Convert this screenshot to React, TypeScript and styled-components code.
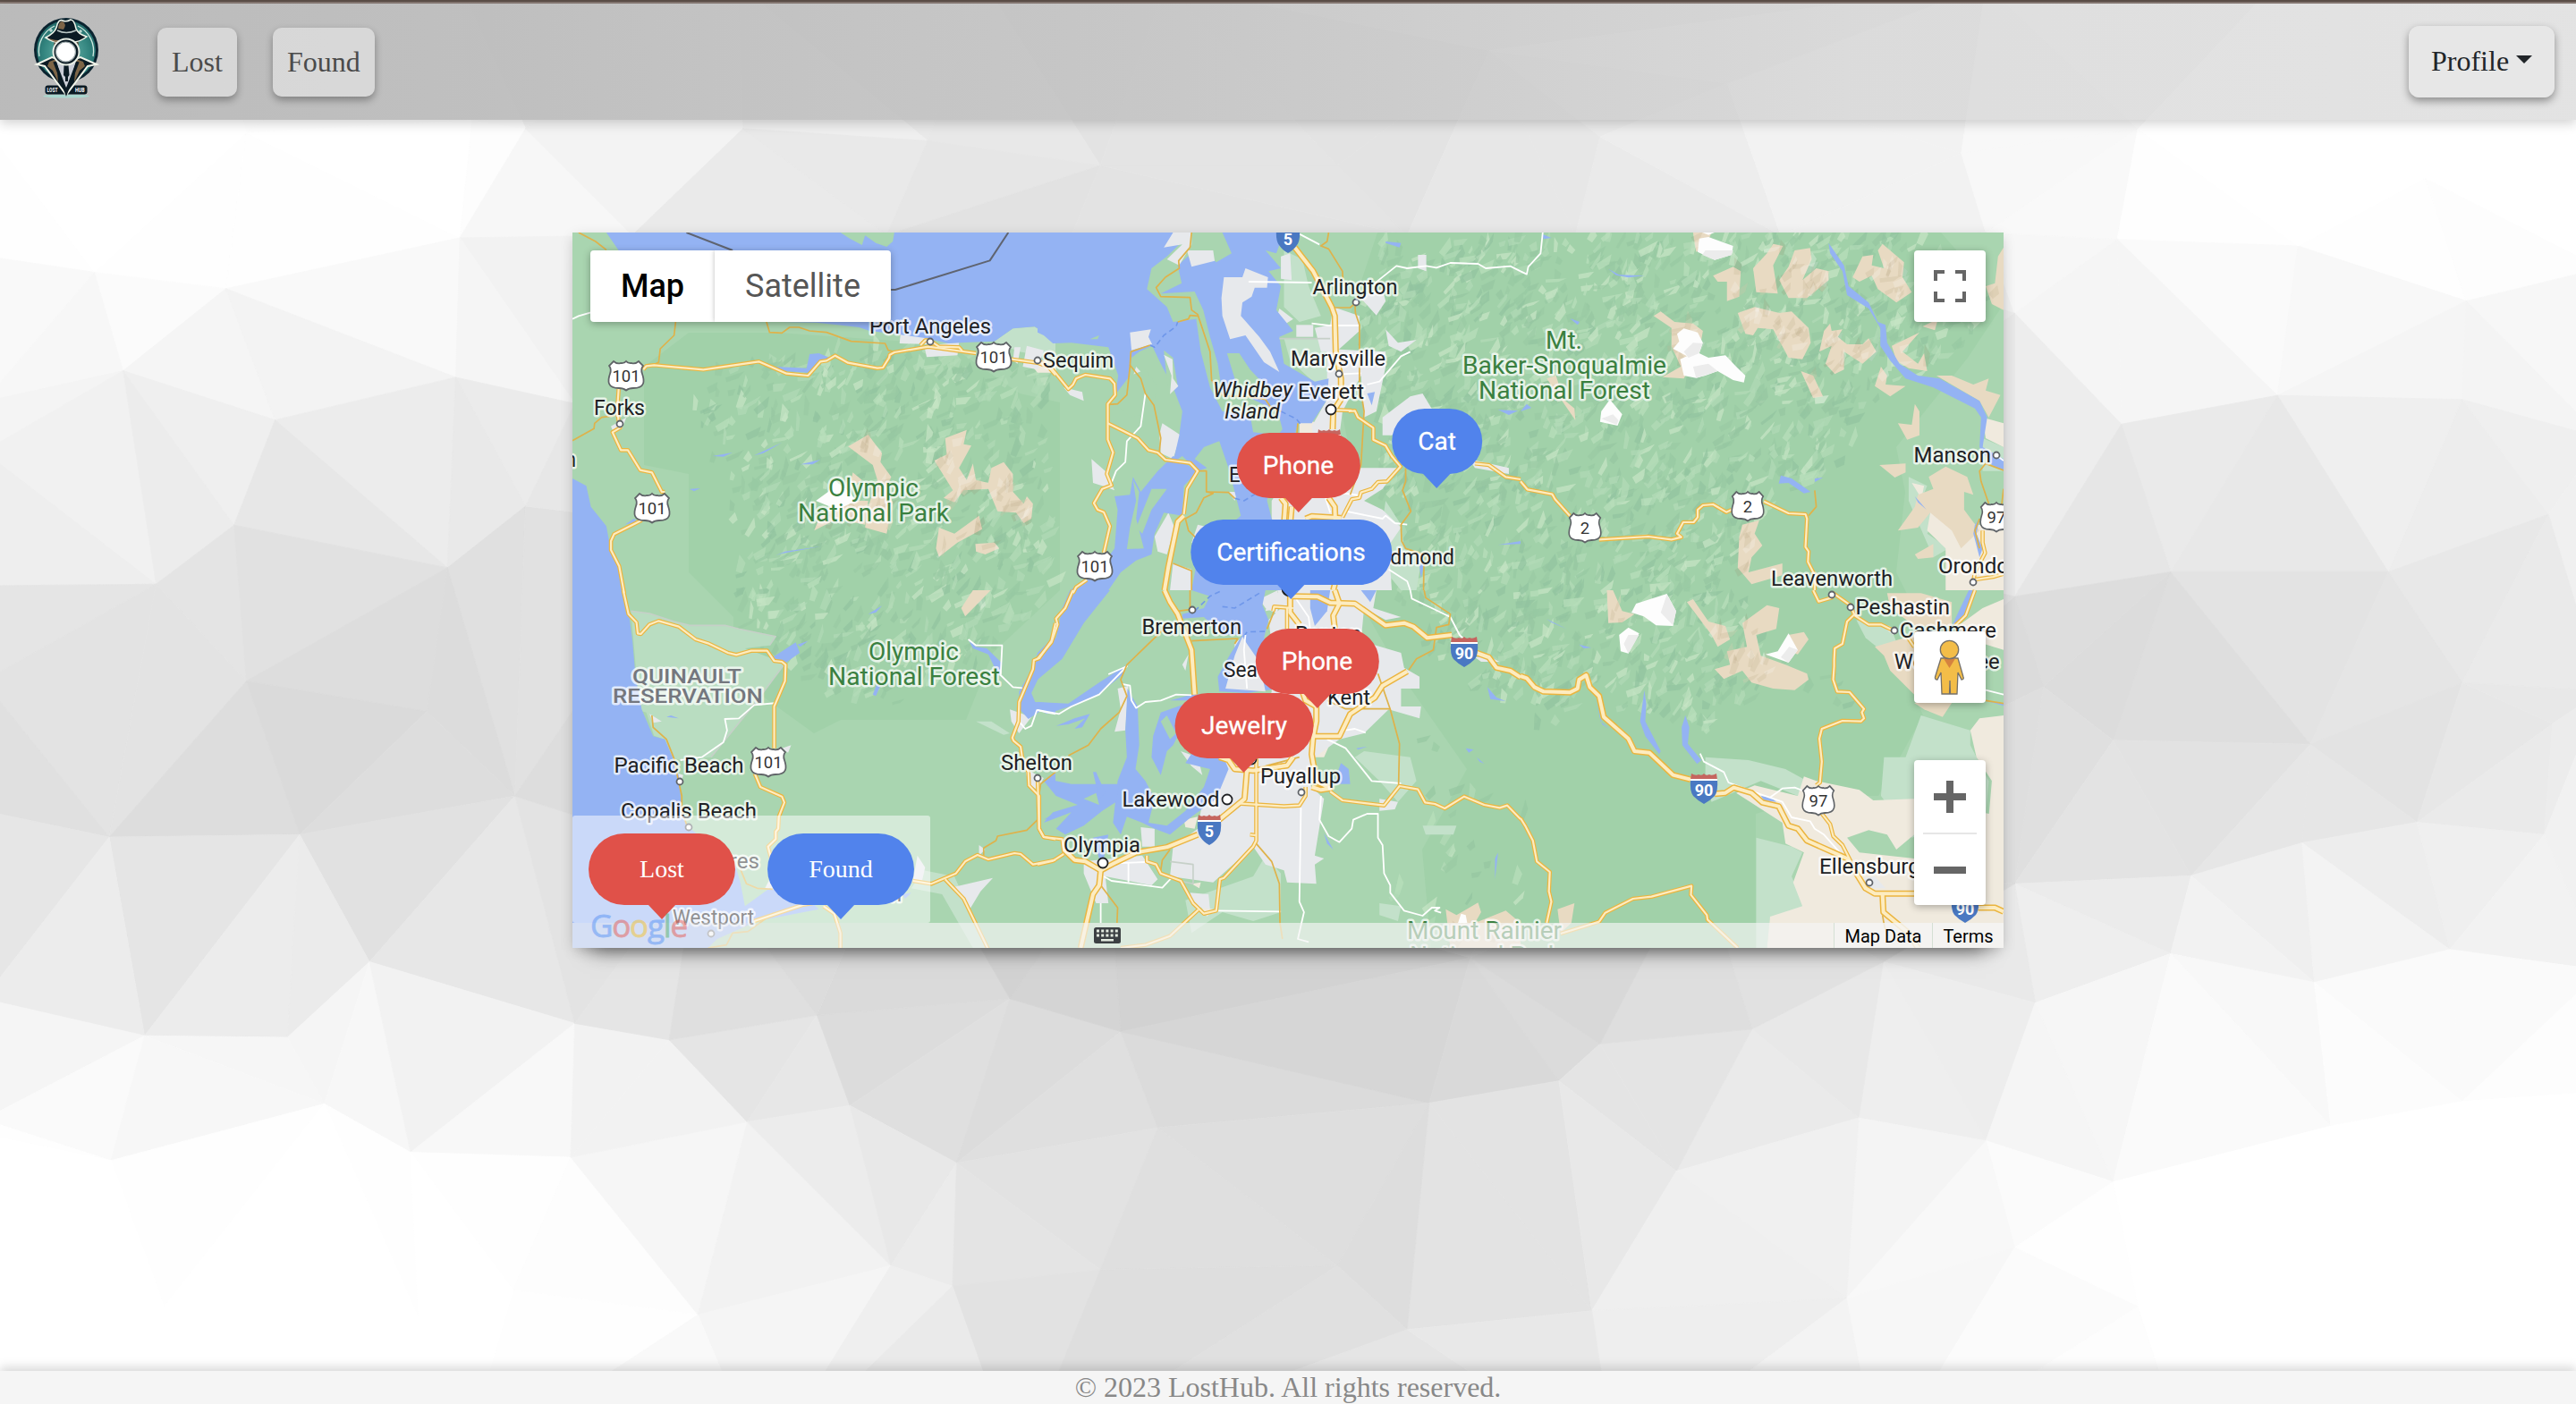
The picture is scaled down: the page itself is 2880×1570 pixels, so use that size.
import React from "react";
import styled, { createGlobalStyle } from "styled-components";

const GlobalStyle = createGlobalStyle`
  html, body, #root { height: 100%; }
  body { margin: 0; font-family: "Liberation Serif", "Times New Roman", serif; overflow: hidden; background: #fff; }
  * { box-sizing: border-box; }
`;

/* ---------- page shell ---------- */

const Page = styled.div`
  position: relative;
  height: 100vh;
  display: flex;
  flex-direction: column;
  isolation: isolate;
`;

const Backdrop = styled.svg`
  position: absolute;
  inset: 0;
  width: 100%;
  height: 100%;
  z-index: -1;
`;

const TopEdge = styled.div`
  height: 4px;
  flex: none;
  background: linear-gradient(#5c4f48 50%, #877973 50%);
`;

const Navbar = styled.header`
  flex: none;
  height: 130px;
  display: flex;
  align-items: center;
  padding: 0 24px 0 37px;
  background: linear-gradient(90deg, rgba(184, 184, 184, 0.96) 0%, rgba(186, 186, 186, 0.92) 18%, rgba(190, 190, 190, 0.75) 45%, rgba(204, 204, 204, 0.6) 72%, rgba(208, 208, 208, 0.6) 100%);
  box-shadow: 0 4px 12px rgba(0, 0, 0, 0.18);
`;

const Brand = styled.a`
  display: flex;
  width: 76px;
  height: 94px;
  margin: -6px 63px 0 0;
`;

const NavLinks = styled.nav`
  display: flex;
  gap: 40px;
  flex: 1;
`;

const NavButton = styled.a`
  height: 77px;
  padding: 0 16px;
  display: flex;
  align-items: center;
  border-radius: 10px;
  background: rgba(255, 255, 255, 0.4);
  box-shadow: 0 4px 8px rgba(0, 0, 0, 0.32);
  color: #4b4b4b;
  font-size: 32px;
`;

const ProfileButton = styled.button`
  height: 80px;
  width: 163px;
  margin-top: -1px;
  padding: 0 25px;
  border: 0;
  display: flex;
  align-items: center;
  gap: 8px;
  border-radius: 12px;
  background: rgba(232, 232, 232, 0.85);
  box-shadow: 0 4px 10px rgba(0, 0, 0, 0.38);
  color: #212529;
  font: 32px "Liberation Serif", "Times New Roman", serif;
`;

const Caret = styled.span`
  border: 9px solid transparent;
  border-top-color: #212529;
  border-bottom: 0;
  margin-top: -5px;
`;

const Main = styled.main`
  flex: 1;
  display: flex;
  justify-content: center;
  align-items: flex-start;
  padding-top: 126px;
`;

const Footer = styled.footer`
  flex: none;
  height: 37px;
  display: flex;
  align-items: center;
  justify-content: center;
  background: #f5f5f5;
  box-shadow: 0 -4px 12px rgba(0, 0, 0, 0.16);
  color: #888;
  font-size: 32px;
  line-height: 37px;
`;

/* ---------- map ---------- */

const MapFrame = styled.section`
  position: relative;
  width: 1600px;
  height: 800px;
  background: #a9d5b0;
  box-shadow: 0 4px 14px -2px rgba(0, 0, 0, 0.22), 0 22px 22px -20px rgba(0, 0, 0, 0.6);
  font-family: Roboto, "Liberation Sans", sans-serif;
`;

const MapCanvas = styled.svg`
  display: block;
  width: 1600px;
  height: 800px;
`;

const Control = styled.div<{ $top: number }>`
  position: absolute;
  right: 20px;
  top: ${(p) => p.$top}px;
  width: 80px;
  min-height: 80px;
  display: flex;
  flex-direction: column;
  align-items: center;
  justify-content: center;
  background: #fff;
  border-radius: 4px;
  box-shadow: 0 2px 8px rgba(0, 0, 0, 0.3);
`;

const ZoomCell = styled.div`
  height: 81px;
  display: flex;
  align-items: center;
  justify-content: center;
  & + & {
    border-top: 2px solid #e6e6e6;
  }
  width: 60px;
`;

const MapTypes = styled.div`
  position: absolute;
  left: 20px;
  top: 20px;
  height: 80px;
  display: flex;
  border-radius: 4px;
  background: #fff;
  box-shadow: 0 2px 8px rgba(0, 0, 0, 0.3);
  overflow: hidden;
`;

const MapType = styled.div<{ $active?: boolean; $w: number }>`
  width: ${(p) => p.$w}px;
  display: flex;
  align-items: center;
  justify-content: center;
  font-size: 36px;
  font-weight: ${(p) => (p.$active ? 500 : 400)};
  color: ${(p) => (p.$active ? "#000" : "#565656")};
  & + & {
    box-shadow: 0 0 5px rgba(0, 0, 0, 0.28);
  }
`;

const LOST = "#e05149";
const FOUND = "#5183ec";

const Bubble = styled.div<{ $color: string }>`
  position: relative;
  display: flex;
  align-items: center;
  justify-content: center;
  background: ${(p) => p.$color};
  color: #fff;
  &::after {
    content: "";
    position: absolute;
    left: calc(50% - 16px);
    top: 100%;
    margin-top: -1px;
    border: 16px solid transparent;
    border-top: 17px solid ${(p) => p.$color};
    border-bottom: 0;
  }
`;

const Pin = styled(Bubble)<{ $x: number; $y: number }>`
  position: absolute;
  left: ${(p) => p.$x}px;
  top: ${(p) => p.$y}px;
  transform: translateX(-50%);
  height: 73px;
  padding: 0 29.5px;
  border-radius: 37px;
  font-size: 28px;
  font-weight: 400;
  -webkit-text-stroke: 0.3px #fff;
  white-space: nowrap;
`;

const Legend = styled.div`
  position: absolute;
  left: 0;
  bottom: 28px;
  width: 400px;
  height: 120px;
  padding: 20px 18px 0;
  display: flex;
  justify-content: space-between;
  border-radius: 3px;
  background: rgba(255, 255, 255, 0.5);
`;

const LegendItem = styled(Bubble)`
  width: 164px;
  height: 80px;
  border-radius: 40px;
  font: 28px "Liberation Serif", "Times New Roman", serif;
`;

const Attribution = styled.div`
  position: absolute;
  left: 0;
  right: 0;
  bottom: 0;
  height: 28px;
  display: flex;
  align-items: center;
  background: rgba(245, 245, 245, 0.67);
  color: #000;
  font-size: 20px;
`;

const KeyboardButton = styled.span`
  display: flex;
  margin-left: 583px;
  flex: 1;
`;

const AttributionLink = styled.a<{ $w: number }>`
  width: ${(p) => p.$w}px;
  height: 28px;
  line-height: 31px;
  text-align: center;
  background: rgba(245, 245, 245, 0.5);
  border-left: 1px solid rgba(200, 215, 200, 0.7);
`;

const GoogleMark = styled.div`
  position: absolute;
  left: 20px;
  bottom: 3px;
  display: flex;
  font: 500 35px/44px "Open Sans", "Noto Sans", sans-serif;
  letter-spacing: -1.2px;
  opacity: 0.42;
`;

const Letter = styled.span<{ $c: string }>`
  color: ${(p) => p.$c};
  -webkit-text-stroke: 0.8px ${(p) => p.$c};
`;

/* ---------- geometry helpers ---------- */

type Pt = [number, number];

const rng = (seed: number) => () => {
  seed = (seed * 1664525 + 1013904223) % 4294967296;
  return seed / 4294967296;
};

const parse = (s: string): Pt[] =>
  s.trim().split(/\s+/).map((p) => p.split(",").map(Number) as unknown as Pt);

const inside = ([x, y]: Pt, poly: Pt[]) => {
  let r = false;
  for (let i = 0, j = poly.length - 1; i < poly.length; j = i++) {
    const [xi, yi] = poly[i];
    const [xj, yj] = poly[j];
    if (yi > y !== yj > y && x < ((xj - xi) * (y - yi)) / (yj - yi) + xi) r = !r;
  }
  return r;
};

/* Bowyer–Watson triangulation for the low-poly backdrop */
const triangulate = (src: number[][]) => {
  const pts = [...src.map((p) => [p[0], p[1]]), [-9000, -9000], [12000, -9000], [1440, 15000]];
  const n = src.length;
  let tris: number[][] = [[n, n + 1, n + 2]];
  const inCircle = (t: number[], p: number[]) => {
    const [a, b, c] = t.map((i) => pts[i]);
    const d = 2 * (a[0] * (b[1] - c[1]) + b[0] * (c[1] - a[1]) + c[0] * (a[1] - b[1]));
    const s = (q: number[]) => q[0] * q[0] + q[1] * q[1];
    const ux = (s(a) * (b[1] - c[1]) + s(b) * (c[1] - a[1]) + s(c) * (a[1] - b[1])) / d;
    const uy = (s(a) * (c[0] - b[0]) + s(b) * (a[0] - c[0]) + s(c) * (b[0] - a[0])) / d;
    return (p[0] - ux) ** 2 + (p[1] - uy) ** 2 < (a[0] - ux) ** 2 + (a[1] - uy) ** 2;
  };
  for (let i = 0; i < n; i++) {
    const bad = tris.filter((t) => inCircle(t, pts[i]));
    const edges = bad.flatMap(([a, b, c]) => [[a, b], [b, c], [c, a]]);
    const rim = edges.filter(
      (e) => edges.filter((f) => (f[0] === e[0] && f[1] === e[1]) || (f[0] === e[1] && f[1] === e[0])).length === 1
    );
    tris = tris.filter((t) => !bad.includes(t)).concat(rim.map((e) => [e[0], e[1], i]));
  }
  return tris.filter((t) => t.every((i) => i < n));
};

/* x, y, grey level */
const L = (a: number[][]) => a.map(([x, y, g]) => [x * 0.918, 130 + y * 0.918, g]);
const R = (a: number[][]) => a.map(([x, y, g]) => [1440 + x * 0.918, 130 + y * 0.918, g]);
const backdropPoints: number[][] = [
  ...L([
    [-20, -160, 255], [250, -160, 255], [560, -160, 250], [900, -160, 238], [1200, -160, 230], [1420, -160, 226],
    [-20, 170, 253], [115, 190, 252], [275, 210, 252], [560, 148, 253], [575, 5, 254], [300, 20, 255], [-20, 10, 255],
    [640, 15, 248], [905, 15, 240], [770, 145, 238], [1130, 30, 234], [1080, 145, 228], [1340, 60, 228],
    [150, 310, 243], [335, 370, 240], [555, 318, 242], [700, 350, 238], [-20, 348, 247], [-20, 408, 240],
    [190, 570, 236], [285, 498, 230], [545, 550, 226], [640, 475, 226], [-20, 572, 232], [-20, 688, 225],
    [300, 688, 219], [133, 878, 222], [365, 875, 222], [627, 828, 220], [520, 725, 218], [-20, 846, 224],
    [-20, 1075, 240], [176, 1120, 241], [350, 1122, 243], [450, 1030, 238], [-20, 1222, 250], [135, 1272, 253],
    [395, 1203, 252], [500, 1262, 253], [700, 1105, 240], [-20, 1240, 255], [695, 1268, 252], [625, 1430, 255],
    [850, 1460, 248], [910, 1225, 240], [815, 1125, 230], [995, 1095, 221], [1035, 1205, 229], [1230, 1075, 215],
    [1165, 1275, 229], [1365, 1115, 211], [1410, 1232, 225], [1085, 1400, 239], [1340, 1405, 221], [1160, 1425, 235],
    [510, 1465, 255], [560, 1650, 255], [-20, 1650, 255], [930, 1650, 244], [1240, 1650, 226], [850, 900, 222],
    [1100, 850, 212], [1350, 900, 208], [850, 500, 225], [1200, 400, 225], [200, 1450, 255],
  ]),
  ...R([
    [60, 60, 229], [145, 145, 229], [245, -80, 228], [380, 25, 232], [350, 145, 233], [535, -40, 238], [600, 145, 236],
    [820, 45, 246], [1035, 15, 254], [850, 142, 246], [1010, 150, 251], [885, 240, 244], [1230, 158, 254],
    [1435, 225, 250], [1385, 75, 255], [1600, 185, 252], [1205, 340, 243], [1015, 375, 240], [1430, 345, 242],
    [1600, 392, 243], [1535, 485, 236], [1340, 555, 233], [1075, 555, 224], [1245, 765, 222], [1005, 760, 219],
    [920, 695, 217], [885, 585, 227], [1430, 690, 230], [1375, 860, 231], [1235, 885, 233], [1540, 740, 233],
    [1530, 875, 236], [1100, 925, 232], [885, 935, 227], [1075, 1020, 243], [1250, 1055, 247], [1415, 1015, 246],
    [1600, 1040, 249], [725, 1030, 228], [910, 1080, 240], [695, 1220, 238], [850, 1248, 246], [565, 1112, 228],
    [380, 1130, 220], [222, 1025, 209], [172, 1202, 219], [330, 1175, 226], [473, 1285, 236], [1005, 1298, 254],
    [1270, 1230, 253], [1430, 1200, 254], [1600, 1188, 254], [1405, 1360, 255], [680, 1440, 246], [885, 1378, 251],
    [1035, 1450, 254], [370, 1455, 234], [145, 1478, 224], [60, 1400, 222], [400, 1650, 235], [720, 1650, 248],
    [1100, 1650, 255], [1600, 1650, 255], [1600, -160, 255], [1200, -160, 254], [850, -160, 244], [500, 900, 218],
    [500, 500, 228], [1600, 10, 255], [1600, 700, 236],
  ]),
];

const facets = (() => {
  const rand = rng(29);
  return triangulate(backdropPoints).map((t) => {
    const avg = t.reduce((s, i) => s + backdropPoints[i][2], 0) / 3;
    const g = Math.max(207, Math.min(255, Math.round(avg + (avg > 251 ? 1 : (rand() - 0.5) * 3.5))));
    return { p: t.map((i) => backdropPoints[i].slice(0, 2).join(",")).join(" "), c: `rgb(${g},${g},${g})` };
  });
})();

/* ---------- map tiles: each shape is [tile, points] in tile units ---------- */

const TILE_ORIGIN: Record<string, Pt> = { A: [0, 0], B: [520, 0], C: [1060, 0], D: [0, 400], E: [520, 400], F: [1060, 400] };
const SX = 540 / 1568;
const SY = 1 / 3;
type Shape = [string, string];

const forests: Pt[][] = [
  parse("80,150 130,112 230,112 420,125 500,180 545,190 545,400 470,470 440,545 300,545 270,560 180,495 180,430 130,380 130,270 80,260"),
  parse("900,0 1530,0 1600,80 1560,140 1480,240 1490,290 1480,380 1500,420 1480,470 1510,540 1460,630 1390,630 1323,650 1323,800 960,800 950,690 1000,600 930,500 890,430 880,300 850,150"),
];

const relief = (() => {
  const rand = rng(7);
  const out: { p: string; c: string; at: Pt }[] = [];
  const tones = ["#92c39f", "#97c9a2", "#95c6a1", "#b4dcb8", "#b1dab6", "#c8e6c6", "#9acba4", "#b9dfbc"];
  const zones: [Pt[], number][] = [
    [parse("130,160 330,125 520,140 535,400 470,480 380,540 270,520 180,440 170,300 130,220"), 1500],
    [parse("900,10 1500,0 1590,60 1560,120 1440,200 1420,260 1340,300 1300,400 1340,500 1270,560 1130,520 1080,560 960,480 900,380 900,250 870,120"), 2500],
    [parse("930,560 1060,600 1060,800 930,800 910,740 960,700"), 180],
    [parse("1330,420 1420,420 1440,520 1340,560"), 60],
    [parse("95,130 230,115 230,160 90,160"), 40],
  ];
  zones.forEach(([zone, count]) => {
    for (let i = 0; i < count; i++) {
      const x = rand() * 1600;
      const y = rand() * 800;
      if (!inside([x, y], zone)) {
        i -= 0.9;
        continue;
      }
      const a = -0.8 + (rand() - 0.5) * 1.5;
      const len = 8 + rand() * 17;
      const w = 3 + rand() * 6;
      const dx = Math.cos(a) * len;
      const dy = Math.sin(a) * len;
      const nx = (-dy / len) * w;
      const ny = (dx / len) * w;
      out.push({
        p: `${x.toFixed(1)},${y.toFixed(1)} ${(x + dx).toFixed(1)},${(y + dy).toFixed(1)} ${(x + dx * 0.6 + nx).toFixed(1)},${(y + dy * 0.6 + ny).toFixed(1)} ${(x + nx * 0.8).toFixed(1)},${(y + ny).toFixed(1)}`,
        c: tones[Math.floor(rand() * tones.length)],
        at: [x + dx * 0.4, y + dy * 0.4],
      });
    }
  });
  return out;
})();

const reserve: Shape[] = [
  ["D", "190,70 250,78 330,105 380,118 495,118 540,130 610,145 660,155 640,185 560,195 690,245 600,370 450,560 350,570 320,560 300,500 265,488 240,410 205,400 205,250"],
];

const pale: Shape[] = [
  ["A", "1370,365 1430,322 1500,316 1568,360 1568,420 1450,400"],
  ["B", "500,40 600,20 630,70 590,100 560,60"],
  ["B", "800,60 860,90 880,180 920,280 850,300 800,250"],
  ["B", "800,355 945,355 960,500 900,505 820,430"],
  ["B", "1130,900 1180,980 1190,1060 1250,1080 1230,1200 1180,1200 1100,1100"],
  ["E", "1060,540 1210,560 1230,640 1170,710 1110,640 1030,560"],
  ["E", "480,1040 700,960 740,890 790,950 790,1080 700,1110 600,1080 500,1150"],
  ["E", "1250,790 1360,790 1350,820 1260,820"],
  ["E", "1110,1050 1180,1060 1170,1110 1110,1090"],
  ["D", "1310,440 1360,440 1420,480 1400,485"],
  ["D", "1140,940 1240,960 1300,1100 1350,1200 1300,1200 1200,1020 1100,1000"],
  ["F", "600,560 740,570 860,600 930,640 900,690 780,640 620,710 600,640"],
  ["F", "765,830 880,860 915,880 880,960 920,1060 810,1100 800,1200 765,1200"],
  ["F", "1300,420 1460,470 1460,520 1520,640 1510,760 1270,830 1170,690 1180,560 1250,560"],
  ["F", "1090,100 1200,120 1230,200 1180,210 1120,160"],
  ["C", "1260,820 1320,850 1300,900 1350,960 1320,1010 1390,1060 1340,1090 1260,900"],
  ["C", "1500,690 1568,720 1568,800 1500,800"],
];

const beige: Shape[] = [
  ["F", "1568,30 1500,60 1420,120 1440,160 1568,200"],
  ["F", "1568,420 1490,430 1460,470 1480,560 1530,640 1520,760 1568,780"],
  ["F", "700,680 760,655 900,690 920,625 960,640 1100,670 1145,705 1278,700 1278,820 1220,870 1190,820 1130,805 1060,830 1100,880 1278,900 1278,1056 1568,1056 1568,1200 800,1200 810,1095 915,1060 885,980 920,880 860,850 850,780 760,720"],
  ["F", "1278,700 1568,760 1568,1200 1278,1200"],
  ["C", "1500,620 1568,640 1568,720 1510,690"],
  ["C", "1270,840 1310,850 1300,900 1400,960 1568,1000 1568,1200 1380,1200 1380,1060 1320,1000 1330,940"],
  ["A", "1470,420 1540,430 1568,470 1510,470"],
  ["B", "0,430 60,440 60,470 0,465"],
  ["B", "850,620 910,640 880,700 850,680"],
  ["E", "475,770 520,760 510,800 480,795"],
  ["E", "890,510 960,490 930,560 900,560"],
  ["E", "500,985 530,980 525,1000"],
  ["E", "530,1060 570,1070 550,1095"],
];

const urban: Shape[] = [
  ["A", "1065,340 1140,345 1155,375 1062,372"],
  ["A", "1142,380 1255,368 1250,412 1150,418"],
  ["A", "1435,385 1455,385 1445,440 1430,430"],
  ["A", "1475,380 1530,395 1510,460 1462,450"],
  ["A", "125,650 175,620 160,660 130,662"],
  ["B", "440,0 500,0 500,40 460,110 420,90 470,40 410,50"],
  ["B", "485,60 570,60 575,95 500,115"],
  ["B", "790,80 820,70 825,160 790,155"],
  ["B", "785,255 830,290 800,310 775,290"],
  ["B", "840,310 895,310 895,350 840,350"],
  ["B", "960,250 1045,280 1045,330 970,400 920,400 900,320 950,310"],
  ["B", "940,390 1130,400 1130,450 1100,600 1060,620 1050,480 990,600 980,680 900,720 890,650 940,560"],
  ["B", "1045,215 1120,190 1130,230 1100,278"],
  ["B", "1130,325 1170,370 1230,360 1180,400 1140,380"],
  ["B", "1235,75 1262,75 1262,130 1235,120"],
  ["B", "1210,550 1250,540 1285,600 1150,680 1120,680 1120,620"],
  ["B", "1400,760 1530,790 1530,810 1420,790"],
  ["B", "1000,780 1050,790 1170,790 1120,860 1060,900 1120,930 1180,990 1140,1050 1150,1200 760,1200 760,900 850,760"],
  ["B", "300,335 368,325 360,350 372,375 305,395"],
  ["B", "320,450 355,490 350,530 295,530"],
  ["B", "175,760 220,800 250,865 210,850 180,840"],
  ["B", "405,640 465,680 440,760 400,740 395,680"],
  ["B", "425,940 445,990 420,1080 390,1070 380,1020"],
  ["B", "620,870 650,870 640,900"],
  ["B", "440,1110 500,1130 500,1200 430,1200"],
  ["B", "85,520 145,535 150,565 105,545"],
  ["B", "520,980 600,1000 580,1060 500,1040"],
  ["D", "250,415 290,440 262,445"],
  ["D", "680,530 710,520 700,545"],
  ["D", "1420,400 1490,425 1450,480 1425,440"],
  ["D", "1240,995 1365,965 1325,1010 1290,1070"],
  ["D", "1120,890 1145,930 1135,975 1105,975"],
  ["D", "1320,855 1340,870 1320,890"],
  ["D", "1470,600 1530,630 1510,670 1480,650"],
  ["D", "330,610 360,620 350,650"],
  ["D", "690,1020 625,1000 650,950 680,1000"],
  ["E", "780,0 1100,0 1090,60 1180,90 1130,100 1060,60 1050,170 1180,210 1190,260 1240,290 1240,330 1180,330 1180,390 1245,390 1240,430 1140,400 1060,480 980,500 900,560 880,700 840,700 700,560 740,420 760,340 760,180 750,100 790,60"],
  ["E", "590,560 850,560 870,640 930,700 900,890 930,900 900,920 905,985 810,980 800,940 740,920 700,860 570,980 430,960 440,860 520,800 530,740 560,640"],
  ["E", "150,910 340,890 390,970 370,990 220,960 230,1050 190,1050 150,950"],
  ["E", "335,795 380,800 380,860 340,860"],
  ["E", "495,1015 555,1020 560,1070 510,1060"],
  ["E", "640,180 660,160 700,230 720,320 620,330 640,250"],
  ["E", "260,330 295,320 285,470 250,475 270,400"],
  ["E", "465,540 520,560 535,620 500,590"],
  ["E", "560,60 580,120 660,90 590,130 560,110"],
  ["E", "720,30 780,0 780,80 740,60"],
  ["E", "1110,700 1170,710 1160,735 1110,740"],
  ["E", "470,250 490,215 480,270"],
  ["E", "1420,225 1460,220 1500,240 1440,240"],
  ["F", "1110,965 1150,960 1185,1000 1120,1000"],
  ["F", "1180,125 1220,130 1210,150"],
];

const water: Shape[] = [
  ["A", "110,0 1568,0 1568,355 1500,316 1430,322 1370,365 1290,368 1220,372 1150,355 1060,342 965,330 930,318 860,310 790,302 680,300 400,150 150,60"],
  ["A", "770,408 800,405 835,420 800,440 765,470 690,465 660,450 760,455"],
  ["A", "0,825 45,850 60,920 110,985 120,1040 150,1110 160,1200 0,1200"],
  ["A", "455,750 520,738 490,752"],
  ["A", "590,748 680,705 620,740"],
  ["A", "740,778 805,762 780,778"],
  ["A", "380,860 415,858 395,868"],
  ["A", "660,1083 690,1070 810,1052 680,1077"],
  ["A", "170,980 200,960 210,970"],
  ["B", "0,0 800,0 775,70 740,60 790,120 750,130 790,180 775,260 830,330 785,350 800,440 900,500 945,490 940,560 890,640 845,640 830,700 770,760 745,900 760,960 800,1020 840,1200 500,1200 520,1090 600,1000 660,950 640,870 620,790 590,700 540,720 510,760 550,790 520,800 470,750 440,770 460,680 470,600 440,520 400,440 372,380 330,400 305,420 290,540 250,560 262,480 235,400 230,385 110,370 50,372 20,345 0,335"],
  ["B", "440,750 520,800 475,850 470,950 410,940 380,1010 370,1080 320,1100 270,1140 230,1200 105,1200 200,1130 250,1060 260,930 250,885 300,880 310,820 335,870 390,800"],
  ["B", "1130,30 1180,35 1175,50 1130,35"],
  ["B", "1070,540 1095,535 1085,580"],
  ["B", "1495,595 1560,598 1530,612"],
  ["B", "1495,1048 1568,1035 1568,1045"],
  ["B", "1240,1120 1260,1090 1245,1160"],
  ["C", "1000,35 1050,110 1065,180 1130,235 1160,300 1185,310 1190,370 1230,440 1290,480 1360,490 1490,565 1515,620 1500,720 1568,760 1568,800 1530,780 1490,720 1495,620 1475,590 1340,520 1250,490 1200,430 1168,380 1168,320 1130,255 1060,210 1045,130 1005,70"],
  ["C", "845,815 880,825 942,870 920,875 870,840 838,842"],
  ["C", "955,825 982,822 955,837"],
  ["C", "285,122 320,142 403,145 350,151 310,143"],
  ["C", "160,288 192,300 185,310"],
  ["C", "0,600 20,575 35,588"],
  ["C", "70,5 100,18 75,22"],
  ["C", "1280,885 1318,930 1290,905"],
  ["C", "1475,980 1490,960 1480,1010 1500,1060 1490,1090 1470,1010"],
  ["D", "0,0 165,0 182,70 195,170 205,290 225,400 262,490 300,500 325,560 345,620 352,700 370,790 420,830 520,890 545,980 560,1060 640,1000 780,1050 800,1070 600,1110 470,1170 440,1200 0,1200"],
  ["D", "650,225 725,175 738,210 690,245"],
  ["D", "730,182 765,170 740,190"],
  ["D", "305,425 345,430 320,420"],
  ["D", "960,80 1005,52 985,75"],
  ["D", "975,350 990,310 998,325 985,355"],
  ["D", "1285,165 1310,190 1345,195 1395,245 1385,290 1350,215 1300,195"],
  ["D", "1568,215 1520,280 1490,345 1502,375 1568,380 1568,412 1520,405 1480,432 1452,400 1450,340 1500,250 1510,210 1568,150"],
  ["D", "1568,610 1530,640 1568,650"],
  ["D", "1530,770 1568,745 1568,760"],
  ["D", "1070,1020 1100,1015 1080,1035"],
  ["E", "105,0 235,0 150,110 80,230 0,300 0,230 60,160 80,60"],
  ["E", "0,375 100,380 200,310 290,250 275,285 190,355 120,385 30,415 0,400"],
  ["E", "500,0 740,0 730,50 750,100 735,160 770,200 780,330 680,345 590,340 585,290 625,215 665,150 600,150 540,90 470,95 470,80 540,60 560,20"],
  ["E", "885,0 950,0 940,70 900,120 885,60"],
  ["E", "1050,0 1100,0 1080,40"],
  ["E", "292,330 325,390 330,520 318,600 350,640 380,700 360,780 420,790 480,740 540,660 560,600 480,580 530,500 480,440 440,520 420,540 400,620 370,560 375,490 400,410 510,370 430,370 520,345 620,600 580,700 500,760 430,820 380,800 340,780 290,760 270,820 245,780 260,640 290,560 285,470"],
  ["E", "20,640 60,640 110,650 190,650 265,650 255,710 210,740 150,790 90,820 60,800 110,745 20,780 50,745 130,720 60,690"],
  ["E", "60,455 120,430 170,415 145,460 120,465 155,430 100,450"],
  ["E", "180,610 200,700 220,680 190,610"],
  ["E", "180,830 230,820 215,900 200,900"],
  ["E", "985,580 1010,600 1015,650 960,650"],
  ["E", "1460,325 1490,360 1520,372 1470,365"],
  ["E", "1390,530 1415,535 1400,545"],
  ["E", "1425,560 1450,582 1435,575"],
  ["E", "1035,530 1070,525 1040,535"],
  ["E", "930,815 960,870 940,850"],
  ["E", "1485,900 1495,880 1485,970"],
  ["F", "402,335 408,380 405,440 455,540 450,550 405,490 388,440"],
  ["F", "535,420 548,460 543,515 587,570 573,583 525,520 523,460"],
  ["F", "245,365 260,440 288,465 265,450"],
  ["F", "780,690 815,695 830,710 790,705"],
  ["F", "85,97 150,130 100,108"],
  ["F", "190,182 230,193 205,195"],
  ["F", "1455,0 1475,0 1445,90 1400,120"],
  ["F", "1505,370 1568,382 1568,388"],
];

const islands: Shape[] = [
  ["A", "870,0 1045,0 1040,30 1020,48 985,35 950,10 940,42 900,20"],
  ["B", "500,0 600,0 630,70 580,100 545,65 500,70 455,110 468,170 400,205 510,198 538,260 560,350 585,440 600,545 660,490 700,560 780,600 795,660 780,680 700,670 690,612 600,600 560,520 530,400 515,290 440,300 420,250 355,190 370,120 420,80"],
  ["B", "410,395 440,420 455,515 425,545"],
  ["B", "615,405 655,405 690,460 745,520 760,545 690,555 640,490"],
  ["B", "170,358 200,345 195,358"],
  ["B", "310,830 330,870 320,960 345,1060 290,1062 300,990 320,900"],
  ["B", "350,460 385,510 380,600 300,620 240,560 300,480"],
  ["B", "370,860 420,860 370,930 340,1010 320,990"],
  ["E", "400,440 420,420 450,480 430,500"],
  ["E", "150,700 190,680 200,720"],
];

const islandUrban: Shape[] = [
  ["B", "440,0 500,0 500,40 460,110 420,90 470,40 410,50"],
  ["B", "485,60 570,60 575,95 500,115"],
  ["B", "605,150 665,150 675,120 748,150 745,185 705,185 695,215 665,235 660,280 720,350 755,400 785,468 735,435 675,345 625,358 600,280 597,220"],
  ["B", "410,410 438,425 440,490 457,515 430,542 435,480"],
  ["B", "300,335 368,325 360,350 372,375 305,395"],
  ["E", "665,155 680,180 720,240 740,340 610,330 640,220"],
  ["E", "750,20 800,0 790,60 740,70"],
];

const tan: Shape[] = [
  ["A", "895,718 960,678 1005,740 1000,770 1035,820 1020,850 1040,910 1020,1010 950,990 960,920 990,830 975,780"],
  ["A", "910,805 940,830 900,860"],
  ["A", "785,1000 800,960 870,880 900,900 960,900 950,980 860,960"],
  ["A", "1175,765 1215,745 1210,690 1280,662 1270,710 1295,715 1255,790 1280,830 1300,775 1310,830 1350,840 1360,790 1400,770 1430,810 1430,870 1465,910 1475,885 1495,910 1490,960 1465,975 1440,940 1380,935 1350,860 1270,865 1240,905 1205,890 1235,865"],
  ["A", "1190,990 1240,1010 1320,950 1330,995 1250,1040 1190,1088 1180,1060"],
  ["A", "1308,1045 1370,1040 1385,1060 1340,1080 1310,1070"],
  ["D", "1300,0 1358,0 1330,30 1275,88 1262,60"],
  ["C", "560,0 620,0 600,50 570,65"],
  ["C", "625,145 690,115 715,130 710,215 670,230 670,165 640,165"],
  ["C", "755,120 800,70 820,38 852,45 820,110 835,205 765,200"],
  ["C", "840,160 870,115 890,60 940,52 945,90 915,160 960,120 1000,130 1000,160 930,220 870,220"],
  ["C", "1078,150 1110,80 1145,75 1140,110 1180,120 1160,60 1175,38 1245,100 1240,150 1270,200 1220,235 1160,190 1140,145 1100,165"],
  ["C", "1510,180 1540,170 1550,80 1568,50 1568,260 1530,240"],
  ["C", "432,280 455,265 500,300 560,305 592,330 580,400 530,490 460,485 520,450 490,380 490,320"],
  ["C", "705,270 760,250 840,270 880,265 935,320 942,370 915,425 870,420 820,325 770,320 755,345 730,340"],
  ["C", "970,400 985,330 1005,305 1010,330 1045,325 1030,350 1060,375 1110,375 1130,355 1155,400 1110,440 1050,400 1050,460 1020,475 990,440 1010,380"],
  ["C", "910,465 950,480 982,550 950,555"],
  ["C", "1205,380 1295,335 1240,400 1290,440 1310,405 1320,465 1260,455 1220,430"],
  ["C", "1150,515 1170,450 1190,480 1185,510 1250,515 1200,550"],
  ["C", "1350,480 1400,480 1470,510 1520,490 1510,530 1558,545 1520,620 1490,565"],
  ["C", "1225,640 1270,645 1280,575 1295,600 1295,680 1255,695"],
  ["C", "1165,780 1250,775 1250,805 1215,822"],
  ["C", "1325,820 1380,785 1450,820 1470,880 1440,870 1440,930 1490,1000 1430,1060 1400,1000 1330,940 1290,990 1225,1000 1280,920 1290,880 1340,860"],
  ["C", "1280,1080 1340,1045 1340,1090 1290,1095"],
  ["C", "720,980 775,965 760,1010 785,1050 750,1090 740,1140 850,1110 850,1150 750,1180 705,1125 710,1020"],
  ["C", "1305,315 1355,290 1345,328"],
  ["C", "85,490 115,480 140,560 175,590 178,630"],
  ["F", "280,0 300,0 330,70 370,80 330,108 285,110"],
  ["F", "540,40 560,30 610,105 665,120 680,165 640,190 620,150"],
  ["F", "720,110 800,50 840,60 830,130 765,150 780,220 860,250 930,280 935,300 890,335 820,330 750,310 720,270 660,298 630,265 680,250 670,205 735,190"],
  ["F", "870,150 920,140 935,165 900,215 870,205"],
  ["F", "1190,10 1300,10 1400,40 1400,120 1280,120 1200,60"],
  ["F", "1150,190 1278,150 1278,350 1200,270 1180,220"],
  ["F", "1278,378 1400,378 1370,425 1310,400"],
  ["F", "120,1070 175,1050 165,1116 130,1150"],
  ["E", "1325,1070 1360,1090 1430,1048 1440,1080 1420,1116 1520,1075 1568,1116 1568,1200 1340,1200"],
];

const snow: Shape[] = [
  ["C", "580,20 610,15 650,30 690,45 685,75 630,92 575,65"],
  ["C", "590,0 630,0 610,8"],
  ["C", "508,340 530,322 575,335 592,370 580,405 610,420 665,412 700,450 730,480 725,503 690,495 640,465 600,480 570,488 530,480 518,425 540,415 495,390 515,365"],
  ["C", "262,600 290,560 330,610 315,648 258,635"],
  ["F", "360,75 375,45 475,12 505,70 495,120 440,118 400,88"],
  ["F", "320,150 350,125 385,145 350,212 325,205"],
  ["F", "795,215 835,205 870,145 900,200 870,243"],
  ["A", "790,900 830,870 850,830 900,870 920,900 860,930"],
  ["E", "1375,1085 1390,1090 1395,1116 1365,1116"],
];

const snowShade: Shape[] = [
  ["C", "600,60 690,60 685,75 630,92 590,75"],
  ["C", "530,400 560,370 590,372 580,405 545,420"],
  ["C", "560,450 610,440 640,465 570,488"],
  ["C", "262,625 300,610 318,630 312,645"],
  ["F", "455,75 475,15 505,70 495,118"],
  ["F", "335,180 350,150 385,150 350,212"],
  ["F", "845,225 872,190 900,200 870,243"],
];

const whiteRoads: Shape[] = [
  ["A", "0,290 20,280 60,268"],
  ["B", "685,165 890,168"],
  ["B", "850,5 915,40"],
  ["B", "890,305 945,312 1045,312"],
  ["B", "1095,170 1165,112 1200,120 1262,112 1295,118 1340,102 1430,105 1455,120 1535,113 1568,130"],
  ["C", "0,130 20,140 25,115 65,70 72,0"],
  ["B", "350,540 335,650 290,700 285,770 255,800 240,840"],
  ["B", "1070,510 1110,500 1180,415 1210,400"],
  ["B", "985,475 1050,472"],
  ["B", "1000,935 1120,960 1130,950 1160,975 1200,980"],
  ["B", "1140,1130 1200,1170 1210,1200"],
  ["B", "935,890 950,940"],
  ["B", "960,870 1045,882"],
  ["D", "350,570 420,560 490,510 502,470 495,432 540,430 590,385 665,378"],
  ["D", "1285,165 1310,185 1395,185 1390,285 1430,325 1460,328"],
  ["D", "1450,440 1470,465 1490,455 1508,402 1540,410 1568,415"],
  ["E", "0,402 70,415 110,390 200,350 290,255 230,282"],
  ["E", "275,315 300,320 305,370 320,395 350,375 400,370 450,350 500,352"],
  ["E", "840,30 880,90 885,130"],
  ["E", "1210,0 1215,28 1280,60 1340,90 1370,150 1400,180"],
  ["E", "675,150 670,200 680,330"],
  ["E", "1000,470 1030,465 1065,478"],
  ["E", "940,500 1000,530 1085,640 1180,648"],
  ["E", "920,690 915,770 945,825 980,845 1020,800 1025,770 1070,750 1105,750 1105,830 1120,855 1125,950 1145,990 1145,1015 1190,1075 1250,1092 1280,1065 1305,1065 1290,1075 1310,1082"],
  ["E", "855,730 850,1045 865,1080 845,1170 880,1180"],
  ["E", "580,1075 790,1078"],
  ["E", "205,1050 205,1116"],
  ["E", "215,960 240,975 405,998 435,965"],
  ["E", "295,915 295,980"],
  ["E", "270,915 350,912"],
  ["F", "583,548 595,575 660,610 675,645 780,685 850,710 880,762 940,775 955,800 985,820 1045,890"],
  ["F", "810,695 850,665 890,662 915,672"],
  ["F", "1510,335 1568,350"],
  ["C", "1535,740 1568,765"],
];

const minorRoads: Shape[] = [
  ["A", "20,0 75,30 110,58"],
  ["A", "335,300 330,345 285,390 280,435 262,445"],
  ["A", "630,300 640,335 680,337 705,318 735,318 770,330 825,335 905,365 1015,372 1025,395 1045,400"],
  ["A", "0,698 70,658 72,640 95,620 135,615"],
  ["B", "500,0 495,50 458,95 460,120 415,150 385,185 400,215 495,218 500,260 520,275 560,400 565,495 600,545"],
  ["B", "455,300 490,290 495,278 520,280"],
  ["B", "945,0 940,30 920,45 945,55 990,130 992,180"],
  ["B", "962,252 1015,252 1030,238 1032,270 1045,310 1045,500 1060,600 1050,780 1015,880"],
  ["B", "600,548 680,550 740,560 760,590 790,600"],
  ["B", "365,378 303,400 300,450 290,545 260,575 230,577"],
  ["B", "300,445 335,490 350,540 378,580 400,690 395,740"],
  ["B", "520,800 548,800 548,870 570,875 540,890 515,940 480,960 490,1000 530,1040"],
  ["B", "548,870 620,872 640,892"],
  ["B", "845,640 840,700"],
  ["B", "1195,790 1195,835 1185,865 1212,935 1180,980 1182,1035 1195,1060 1255,1080 1253,1200"],
  ["B", "440,1110 500,1135 500,1200"],
  ["C", "955,865 960,920 935,950"],
  ["C", "1568,798 1510,775 1490,800 1495,835 1520,910"],
  ["C", "1568,860 1560,930"],
  ["C", "1490,960 1475,1000 1490,1060"],
  ["D", "258,420 262,460 305,500 330,565 340,620 355,690 355,740 375,800"],
  ["D", "1568,610 1520,650 1515,685"],
  ["D", "1510,770 1475,805 1380,825 1375,840 1335,865 1335,890"],
  ["D", "545,935 565,985 600,1000 650,1003"],
  ["D", "440,1200 500,1190 520,1150 570,1145 650,1085 780,1050"],
  ["E", "495,0 495,65 455,70"],
  ["E", "100,555 165,520 205,465 265,410 290,355 270,300 290,250 410,130"],
  ["E", "500,170 650,162 640,180"],
  ["E", "770,65 745,130"],
  ["E", "1255,0 1260,25 1340,80 1335,115 1295,125 1285,200 1230,230 1205,268"],
  ["E", "1105,280 1125,340 1145,400 1175,515 1172,655"],
  ["E", "940,370 1000,398 1145,398"],
  ["E", "710,850 760,910 785,985 787,1116 795,1170"],
  ["E", "205,990 260,1065 258,1116"],
  ["E", "430,870 405,905 400,940"],
  ["E", "740,590 850,560"],
  ["F", "1510,370 1568,380"],
  ["F", "1175,1090 1180,1120 1190,1160"],
];

const midRoads: Shape[] = [
  ["A", "230,460 240,448 265,445 425,460 605,433 695,473 765,480 805,433 825,430 853,413 895,437 990,455 1008,453 1028,420 1030,410 1045,402 1155,383 1310,405"],
  ["A", "1130,378 1145,362 1160,362 1190,383 1255,385 1265,397"],
  ["A", "1425,425 1510,437 1545,450 1568,478"],
  ["B", "0,430 45,455 100,525 115,510 125,490 155,477 235,490 250,507 252,545 228,575 228,695 245,738 225,810 240,848 210,860 183,908 195,930 215,938 235,985 215,1075"],
  ["B", "228,640 325,690 360,730 390,738 415,762 495,773 520,800 485,860 475,945"],
  ["B", "160,1165 125,1190 115,1210"],
  ["A", "150,525 145,600 150,630 155,655 130,670 157,730 180,730 220,797 258,805 290,870 300,870"],
  ["A", "225,965 135,1012 125,1035 125,1065 152,1120 168,1210"],
  ["D", "165,0 182,80 208,108 212,145 222,147 250,115 280,103 345,122 400,165 440,178 505,210 532,217 580,203 632,203 655,237 680,240 692,250 690,305 655,390 655,530"],
  ["D", "592,615 610,660 680,692 688,712 670,760 668,800 660,810 660,835 635,860 645,900"],
  ["D", "1568,110 1555,170 1515,228 1498,235 1495,265 1450,375 1448,440 1428,495 1432,505 1455,525 1460,560 1480,610 1482,655 1515,690 1515,800 1530,828 1568,835"],
  ["D", "1105,975 1165,985 1245,950 1275,910 1315,888 1350,903 1435,882 1455,885 1495,920 1568,905"],
  ["D", "1210,970 1270,1035 1350,1205"],
  ["D", "815,1060 850,1085 870,1150 870,1200"],
  ["D", "590,1110 750,1055 780,1050"],
  ["E", "115,0 90,60 60,95 65,115 45,175 0,230"],
  ["E", "0,620 5,800 20,828 80,835 85,875"],
  ["E", "0,920 50,908 85,885"],
  ["B", "1010,600 1030,598 1040,620 1090,655 1090,695 1130,715 1150,750 1178,785 1135,835 1105,837 1085,860 1050,872 1045,890 1020,895 990,955"],
  ["B", "970,595 1020,597"],
  ["B", "1420,775 1465,780 1520,820 1568,828"],
  ["C", "0,835 22,862 103,878 112,895 160,950"],
  ["C", "255,1030 415,1020 490,1030 522,1022 508,1010 528,972 562,972 575,955 575,930 592,915 625,912 668,938 685,930"],
  ["C", "790,902 870,942 925,945 930,960 925,1055 935,1070 933,1105 955,1150 955,1200"],
  ["C", "1500,1000 1500,1040 1508,1075 1475,1140 1470,1170"],
  ["C", "1470,1165 1535,1155 1568,1145"],
  ["F", "950,0 968,38 1010,25 1015,10 1070,50 1085,85 1130,115 1170,115 1210,135"],
  ["F", "1085,80 1060,105 1045,180 1020,195 1018,235 1018,255 1015,300 1028,340 1068,342 1115,398 1108,410 1115,430 1105,440 1045,438 978,465 970,498 978,575 972,645 960,655"],
  ["F", "1475,0 1445,85 1410,120"],
  ["F", "1255,155 1278,190"],
  ["F", "975,745 1005,785 1015,825 1045,855 1072,910"],
  ["F", "0,765 15,790 40,840 53,910 95,945 92,1010 100,1045 85,1116"],
  ["F", "130,1152 255,1112 275,1082 365,1035 425,1028 555,992 553,1022 605,1090 607,1105 705,1200"],
  ["E", "950,675 990,705 1125,722 1175,657 1235,668 1258,712 1290,717 1322,732 1385,692 1450,720 1500,730 1525,722 1568,768"],
  ["E", "710,560 710,840 700,860 605,965 592,970 580,1075 540,1085 505,1050 465,975 400,950 385,920 355,910 355,890"],
  ["E", "690,820 708,822"],
  ["E", "522,1072 430,1160 350,1190 270,1200"],
  ["E", "650,715 800,725 850,722 870,690 870,660"],
  ["E", "765,70 768,55 830,60"],
  ["E", "810,60 810,130"],
  ["E", "720,600 810,585 825,560"],
];

const majorRoads: Shape[] = [
  ["B", "835,50 895,130 955,250 965,280 968,400 985,490 985,560 960,600 958,660"],
  ["B", "790,890 805,910 800,980 800,1000"],
  ["B", "825,920 818,1000"],
  ["B", "945,890 965,920 968,1000"],
  ["B", "870,960 890,952 985,958"],
  ["B", "475,950 455,970 425,1120 412,1200"],
  ["B", "965,1180 960,1200"],
  ["E", "412,0 430,40 455,80 500,200 510,350"],
  ["E", "965,0 980,45 960,85 965,130"],
  ["E", "820,0 820,75 850,115"],
  ["E", "825,20 910,22 950,42 1030,45 1130,118 1190,110 1220,122 1265,160 1345,150"],
  ["E", "1425,210 1465,225 1490,260 1535,270 1568,292"],
  ["F", "0,288 20,295 45,325 75,340 160,343 185,330 190,300 213,285 225,325 255,355 270,425 350,498 370,540 418,545 495,620 552,635"],
  ["F", "630,683 665,680 692,662 750,680 785,712 838,725 870,790 900,800 930,840 1060,900 1120,1000 1150,1018 1278,1018"],
  ["F", "1175,1020 1178,1080 1260,1150 1290,1200"],
  ["F", "1485,1065 1540,1065 1568,1078"],
  ["E", "905,340 905,440 895,490 890,550 905,640 950,665 920,670 890,660"],
  ["E", "860,340 870,370 905,390"],
  ["E", "900,490 980,490 1015,415 1095,360 1120,320 1200,272"],
  ["E", "590,560 620,570 640,600 700,605 810,588 830,560"],
  ["E", "680,600 672,700 590,770"],
  ["E", "520,820 420,862 320,880 250,915 205,940 155,910 120,905 85,870"],
  ["E", "205,940 200,990 180,1020 140,1200"],
];

const tanLocal = tan.map(([t, p]) =>
  parse(p).map(([x, y]) => [TILE_ORIGIN[t][0] + x * SX, TILE_ORIGIN[t][1] + y * SY] as Pt)
);
const tanRelief = relief.filter((r) => tanLocal.some((poly) => inside(r.at, poly)));

const Layer = ({ shapes, fill }: { shapes: Shape[]; fill: string }) => (
  <>
    {shapes.map(([t, p], i) => (
      <g key={i} transform={`translate(${TILE_ORIGIN[t].join(" ")}) scale(${SX} ${SY})`}>
        <polygon points={p} fill={fill} />
      </g>
    ))}
  </>
);

const Roads = ({ shapes, stroke, width, dash }: { shapes: Shape[]; stroke: string; width: number; dash?: string }) => (
  <>
    {shapes.map(([t, p], i) => (
      <polyline
        key={i}
        transform={`translate(${TILE_ORIGIN[t].join(" ")}) scale(${SX} ${SY})`}
        points={p}
        fill="none"
        stroke={stroke}
        strokeWidth={width}
        strokeDasharray={dash}
        strokeLinejoin="round"
        strokeLinecap="butt"
        vectorEffect="non-scaling-stroke"
      />
    ))}
  </>
);

/* ---------- labels and shields ---------- */

type Label = { t: string; x: number; y: number; w: number; kind?: "park" | "area" | "isle" };
const labels: Label[] = [
  { t: "Port Angeles", x: 332, y: 112.5, w: 136 },
  { t: "Sequim", x: 526, y: 151, w: 79 },
  { t: "Forks", x: 24, y: 204, w: 57 },
  { t: "n", x: -8, y: 262, w: 12 },
  { t: "Arlington", x: 827.5, y: 68.5, w: 95 },
  { t: "Marysville", x: 803, y: 149, w: 106 },
  { t: "Everett", x: 811, y: 186, w: 74 },
  { t: "Whidbey", x: 716, y: 183.5, w: 89, kind: "isle" },
  { t: "Island", x: 729, y: 207.5, w: 62, kind: "isle" },
  { t: "Edmonds", x: 734, y: 279, w: 94 },
  { t: "Redmond", x: 888, y: 371, w: 98 },
  { t: "Mt.", x: 1088, y: 129.5, w: 41, kind: "park" },
  { t: "Baker-Snoqualmie", x: 995, y: 158, w: 228, kind: "park" },
  { t: "National Forest", x: 1013, y: 186, w: 192, kind: "park" },
  { t: "Olympic", x: 286, y: 295, w: 101, kind: "park" },
  { t: "National Park", x: 252, y: 323, w: 169, kind: "park" },
  { t: "Olympic", x: 331, y: 478, w: 101, kind: "park" },
  { t: "National Forest", x: 286, y: 505.5, w: 192, kind: "park" },
  { t: "QUINAULT", x: 67, y: 503.5, w: 122, kind: "area" },
  { t: "RESERVATION", x: 45, y: 525.7, w: 168, kind: "area" },
  { t: "Pacific Beach", x: 46.5, y: 604, w: 145 },
  { t: "Copalis Beach", x: 54, y: 655, w: 152 },
  { t: "Ocean Shores", x: 60, y: 711, w: 149 },
  { t: "Westport", x: 112, y: 774, w: 91 },
  { t: "Aberdeen", x: 269, y: 748, w: 99 },
  { t: "Shelton", x: 479, y: 600.7, w: 80 },
  { t: "Olympia", x: 549, y: 693, w: 86 },
  { t: "Lakewood", x: 614.5, y: 642, w: 109 },
  { t: "Bremerton", x: 636.5, y: 449, w: 111.5 },
  { t: "SeaTac", x: 728, y: 497, w: 74 },
  { t: "Renton", x: 808, y: 457, w: 74 },
  { t: "Kent", x: 844, y: 528, w: 48 },
  { t: "Puyallup", x: 769, y: 616, w: 90 },
  { t: "Mount Rainier", x: 933, y: 790, w: 173, kind: "park" },
  { t: "National Park", x: 936, y: 818, w: 169, kind: "park" },
  { t: "Manson", x: 1499.5, y: 257, w: 86.5 },
  { t: "Orondo", x: 1527, y: 381, w: 79 },
  { t: "Leavenworth", x: 1340, y: 395, w: 136 },
  { t: "Peshastin", x: 1434.5, y: 427, w: 105.5 },
  { t: "Cashmere", x: 1484, y: 453, w: 108 },
  { t: "Wenatchee", x: 1477.7, y: 488, w: 118 },
  { t: "Ellensburg", x: 1394, y: 717, w: 113 },
];

const MapLabel = styled.text<{ $kind?: string }>`
  font-family: Roboto, "Liberation Sans", sans-serif;
  font-size: ${(p) => (p.$kind === "park" ? 28 : p.$kind === "area" ? 21.5 : 24)}px;
  font-weight: ${(p) => (p.$kind === "area" ? 500 : 400)};
  font-style: ${(p) => (p.$kind === "isle" ? "italic" : "normal")};
  fill: ${(p) => (p.$kind === "park" ? "#3a8040" : p.$kind === "area" ? "#74777e" : "#202124")};
  stroke: rgba(255, 255, 255, 0.72);
  stroke-width: 5px;
  stroke-linejoin: round;
  paint-order: stroke;
`;

const ShieldText = styled.text<{ $light?: boolean }>`
  font-family: Roboto, "Liberation Sans", sans-serif;
  font-size: ${(p) => (p.$light ? 18 : 18.5)}px;
  font-weight: ${(p) => (p.$light ? 700 : 400)};
  fill: ${(p) => (p.$light ? "#fff" : "#333")};
  text-anchor: middle;
`;

const usRoutes: [string, number, number][] = [
  ["101", 60, 160], ["101", 89, 308], ["101", 471, 139], ["101", 584, 373], ["101", 219, 592],
  ["2", 1132, 330], ["2", 1314, 306], ["97", 1592, 318], ["97", 1393, 635],
];

const UsShield = ({ n, x, y }: { n: string; x: number; y: number }) => (
  <g transform={`translate(${x} ${y})`}>
    <g transform={`scale(${n.length === 3 ? 1 : 0.91} 1)`}>
      <path
        d="M-14-16 Q-10-12.500-6-14 Q-2-13.500 0-16 Q2-13.500 6-14 Q10-12.500 14-16 L19-11 Q16-7 18-2 Q20.500 5 19 9 Q17 14 8 14 Q3 14 0 16.500 Q-3 14-8 14 Q-17 14-19 9 Q-20.500 5-18-2 Q-16-7-19-11Z"
        fill="#fff"
        stroke="#606468"
        strokeWidth="1.800"
      />
    </g>
    <ShieldText y="7">{n}</ShieldText>
  </g>
);

const interstates: [string, number, number][] = [
  ["5", 800, 5], ["", 846, 236], ["90", 997, 468], ["5", 712, 667], ["90", 1265, 621], ["90", 1557, 754],
];

const InterstateShield = ({ n, x, y }: { n: string; x: number; y: number }) => {
  const w = n.length === 2 ? 15 : 13;
  return (
    <g transform={`translate(${x} ${y})`}>
      <path d={`M${-w} -10 Q${-w - 1} 4 ${-w + 3} 9 Q-6 15 0 18 Q6 15 ${w - 3} 9 Q${w + 1} 4 ${w} -10Z`} fill="#4a78c2" />
      <path d={`M${-w + 1} -16 Q-9 -13 -6 -15 Q-2 -13 0 -16 Q2 -13 6 -15 Q9 -13 ${w - 1} -16 L${w} -9 L${-w} -9Z`} fill="#c5655f" />
      <path d={`M${-w} -9 H${w}`} stroke="#fff" strokeWidth="2" />
      <ShieldText $light y="9">{n}</ShieldText>
    </g>
  );
};

const towns: [number, number, number][] = [
  [400, 122, 3.5], [520, 143, 3.5], [53, 214, 3.5], [876, 78, 3.5], [857, 158, 3.5], [848, 198, 5.5],
  [120, 614, 3.5], [130, 665, 3.5], [155, 784, 3.5], [520, 610, 3.5], [593, 705, 5.5], [732, 634, 5.5],
  [693, 422, 3.5], [815, 626, 3.5], [1592, 249, 3.5], [1566, 391, 3.5], [1408, 405, 3.5], [1429, 419, 3.5],
  [1478, 445, 3.5], [1450, 727, 3.5], [801, 399, 7], [759, 589, 5.5],
];

const MapDrawing = () => (
  <MapCanvas viewBox="0 0 1600 800">
    <rect width="1600" height="800" fill="#a9d5b0" />
    {forests.map((f, i) => (
      <polygon key={i} points={f.map((p) => p.join(",")).join(" ")} fill="#a1d1a9" />
    ))}
    {relief.map((r, i) => (
      <polygon key={i} points={r.p} fill={r.c} opacity="0.7" />
    ))}
    <Layer shapes={reserve} fill="#b9ddc1" />
    <Layer shapes={pale} fill="#c3e1ca" />
    <Layer shapes={beige} fill="#f0eade" />
    <Layer shapes={tan} fill="#e8dac2" />
    {tanRelief.map((r, i) => (
      <polygon key={i} points={r.p} fill={i % 3 ? "#b09a78" : "#fff"} opacity={i % 3 ? 0.16 : 0.2} />
    ))}
    <Layer shapes={snow} fill="#fdfdfd" />
    <Layer shapes={snowShade} fill="#ececec" />
    <Layer shapes={urban} fill="#e7e9ec" />
    <Layer shapes={water} fill="#94b3f3" />
    <Layer shapes={islands} fill="#a9d5b0" />
    <Layer shapes={islandUrban} fill="#e7e9ec" />
    <Roads shapes={[["A", "370,0 520,60"], ["A", "1034,192 1048,192 1355,94 1415,0"]]} stroke="#5f6470" width={2} />
    <Roads
      shapes={[["B", "365,378 380,385 410,345 450,315 455,300"], ["B", "790,600 840,625 855,645"], ["B", "640,892 670,900 710,875"], ["E", "510,70 560,20 600,0"], ["E", "600,55 640,60 720,10"], ["E", "670,155 680,140 750,138"]]}
      stroke="#6f97ea"
      width={1.6}
      dash="6 4"
    />
    <Roads shapes={[["D", "190,70 250,78 330,105 380,118 495,118 540,130 610,145 660,155 640,185"], ["D", "690,245 600,370 450,560"], ["B", "785,356 950,356"], ["E", "430,910 505,920 505,985 460,975"]]} stroke="#c6d0c8" width={1.6} />
    <Roads shapes={whiteRoads} stroke="#fff" width={1.8} />
    <Roads shapes={minorRoads} stroke="#dfb24a" width={1.7} />
    <Roads shapes={midRoads} stroke="#ebb53f" width={4.6} />
    <Roads shapes={majorRoads} stroke="#ebb53f" width={7} />
    <Roads shapes={midRoads} stroke="#fdecc0" width={2.2} />
    <Roads shapes={majorRoads} stroke="#fdecc0" width={4} />
    {towns.map(([x, y, r], i) => (
      <circle key={i} cx={x} cy={y} r={r} fill="#fff" stroke={r > 5 ? "#202124" : "#5f6368"} strokeWidth={r > 6 ? 2.5 : 1.8} />
    ))}
    {interstates.map(([n, x, y], i) => (
      <InterstateShield key={i} n={n} x={x} y={y} />
    ))}
    {usRoutes.map(([n, x, y], i) => (
      <UsShield key={i} n={n} x={x} y={y} />
    ))}
    {labels.map((l, i) => (
      <MapLabel key={i} $kind={l.kind} x={l.x} y={l.y} textLength={l.w} lengthAdjust="spacingAndGlyphs">
        {l.t}
      </MapLabel>
    ))}
  </MapCanvas>
);

/* ---------- icons ---------- */

const Logo = () => (
  <svg width="76" height="94" viewBox="0 0 76 94">
    <defs>
      <radialGradient id="teal" cx="50%" cy="55%" r="55%">
        <stop offset="0%" stopColor="#6cb8ae" />
        <stop offset="70%" stopColor="#33857f" />
        <stop offset="100%" stopColor="#236a69" />
      </radialGradient>
    </defs>
    <circle cx="37" cy="37" r="36" fill="#0b2430" />
    <circle cx="37" cy="37" r="33" fill="url(#teal)" />
    <path d="M7 44 A31 31 0 0 1 24 10 M67 44 A31 31 0 0 0 50 10" fill="none" stroke="#cfe9df" strokeWidth="1.300" />
    <path d="M20 13v4M18 15h4M53 14v4M51 16h4" stroke="#e6f4ee" strokeWidth="1" />
    <ellipse cx="37" cy="88.500" rx="26" ry="2" fill="#a9d8cf" />
    <rect x="13.500" y="76.500" width="47" height="10" rx="3" fill="#0b1b24" />
    <path d="M4 53 L21 45 L37 50 L53 45 L71 53 L61 55 L37 87 L13 55Z" fill="#0b1b24" stroke="#f1f5ea" strokeWidth="2" />
    <path d="M18 50 L26 47 L28 73 L22 60 L16 55Z" fill="#7d6547" />
    <path d="M56 50 L48 47 L46 73 L52 60 L58 55Z" fill="#7d6547" />
    <path d="M26 49 L37 54 L48 49 L43 68 L37 80 L31 68Z" fill="#c9cdd6" />
    <path d="M34.500 54h5l1 11-1.500 2v5h-3v-5l-2-2Z" fill="#0b1b24" />
    <path d="M24 50 L37 84 L50 50" fill="none" stroke="#0b1b24" strokeWidth="3.500" />
    <path d="M24 22 L23 34 L51 34 L50 22Z" fill="#5c4a38" />
    <path d="M14 23 Q24 18 26 12 Q28 2 33 4 Q37 6 42 3 Q46 3 48 13 Q50 19 60 22 Q50 30 37 28 Q24 30 14 23Z" fill="#0b1b24" stroke="#eef3e8" strokeWidth="1.600" />
    <path d="M28 13 Q29 4 33 5 Q38 8 34 14Z" fill="#7d6547" />
    <path d="M27 15 Q37 20 48 15" fill="none" stroke="#b9c6c4" strokeWidth="1.400" />
    <path d="M17 24 Q27 27 36 26 L30 29 Q22 28 17 24Z" fill="#8b7355" />
    <circle cx="37" cy="39" r="14.500" fill="#0b1b24" stroke="#e9efe6" strokeWidth="2" />
    <circle cx="36.500" cy="39" r="11" fill="#fff" stroke="#9aa6a8" strokeWidth="1.200" />
    <text x="15.500" y="84.200" fontSize="7" fontWeight="700" fill="#fff" fontFamily="Roboto, sans-serif" textLength="12" lengthAdjust="spacingAndGlyphs">LOST</text>
    <text x="47" y="84.200" fontSize="7" fontWeight="700" fill="#fff" fontFamily="Roboto, sans-serif" textLength="10.500" lengthAdjust="spacingAndGlyphs">HUB</text>
  </svg>
);

const FullscreenIcon = () => (
  <svg width="36" height="36" viewBox="0 0 18 18" fill="#666">
    <path d="M0 0v6h2V2h4V0H0zm16 0h-4v2h4v4h2V0h-2zm0 16h-4v2h6v-6h-2v4zM2 12H0v6h6v-2H2v-4z" />
  </svg>
);

const Pegman = () => (
  <svg width="36" height="62" viewBox="0 0 36 62" stroke="#74706a" strokeWidth="1.300">
    <path d="M8 21 L27 21 L33 42 Q34 45 31 45 L27 37 L26 61 L18.500 61 L18 46 L17.500 61 L9 61 L8 37 L4 45 Q1 45 1.500 42Z" fill="#f3bd48" />
    <path d="M11 21.500 L24 21.500 L17.500 32Z" fill="#d5823f" stroke="none" />
    <circle cx="17.500" cy="11.500" r="10.200" fill="#f3bd48" />
  </svg>
);

const ZoomIcon = ({ plus }: { plus?: boolean }) => (
  <svg width="36" height="36" viewBox="0 0 36 36" fill="#666">
    <path d={plus ? "M14 0h8v14h14v8H22v14h-8V22H0v-8h14z" : "M0 14h36v8H0z"} />
  </svg>
);

const KeyboardIcon = () => (
  <svg width="30" height="18" viewBox="0 0 30 18">
    <rect width="30" height="18" rx="2.500" fill="#3c4043" />
    <path
      d="M3 2.500h3v3h-3zM8.200 2.500h3v3h-3zM13.400 2.500h3v3h-3zM18.600 2.500h3v3h-3zM23.800 2.500h3v3h-3zM3 7.500h3v3h-3zM8.200 7.500h3v3h-3zM13.400 7.500h3v3h-3zM18.600 7.500h3v3h-3zM23.800 7.500h3v3h-3zM8 13h14v2.500h-14z"
      fill="#e3eadf"
    />
  </svg>
);

const pins = [
  { t: "Cat", c: FOUND, x: 966.5, y: 197 },
  { t: "Phone", c: LOST, x: 811.5, y: 224 },
  { t: "Certifications", c: FOUND, x: 803.5, y: 321 },
  { t: "Phone", c: LOST, x: 832.5, y: 443 },
  { t: "Jewelry", c: LOST, x: 751, y: 515 },
];

const google: [string, string][] = [
  ["G", "#4285f4"], ["o", "#ea4335"], ["o", "#fbbc05"], ["g", "#4285f4"], ["l", "#34a853"], ["e", "#ea4335"],
];

export default function App() {
  return (
    <Page>
      <GlobalStyle />
      <Backdrop viewBox="0 0 2880 1570" preserveAspectRatio="none">
        {facets.map((f, i) => (
          <polygon key={i} points={f.p} fill={f.c} stroke={f.c} strokeWidth="0.800" />
        ))}
      </Backdrop>
      <TopEdge />
      <Navbar>
        <Brand>
          <Logo />
        </Brand>
        <NavLinks>
          <NavButton>Lost</NavButton>
          <NavButton>Found</NavButton>
        </NavLinks>
        <ProfileButton>
          Profile
          <Caret />
        </ProfileButton>
      </Navbar>
      <Main>
        <MapFrame>
          <MapDrawing />
          {pins.map((p, i) => (
            <Pin key={i} $color={p.c} $x={p.x} $y={p.y}>{p.t}</Pin>
          ))}
          <Attribution>
            <KeyboardButton>
              <KeyboardIcon />
            </KeyboardButton>
            <AttributionLink $w={110}>Map Data</AttributionLink>
            <AttributionLink $w={80}>Terms</AttributionLink>
          </Attribution>
          <Legend>
            <LegendItem $color={LOST}>Lost</LegendItem>
            <LegendItem $color={FOUND}>Found</LegendItem>
          </Legend>
          <GoogleMark>
            {google.map(([l, c], i) => (
              <Letter key={i} $c={c}>{l}</Letter>
            ))}
          </GoogleMark>
          <MapTypes>
            <MapType $active $w={139}>Map</MapType>
            <MapType $w={197}>Satellite</MapType>
          </MapTypes>
          <Control $top={20}>
            <FullscreenIcon />
          </Control>
          <Control $top={446}>
            <Pegman />
          </Control>
          <Control $top={590}>
            <ZoomCell>
              <ZoomIcon plus />
            </ZoomCell>
            <ZoomCell>
              <ZoomIcon />
            </ZoomCell>
          </Control>
        </MapFrame>
      </Main>
      <Footer>© 2023 LostHub. All rights reserved.</Footer>
    </Page>
  );
}
